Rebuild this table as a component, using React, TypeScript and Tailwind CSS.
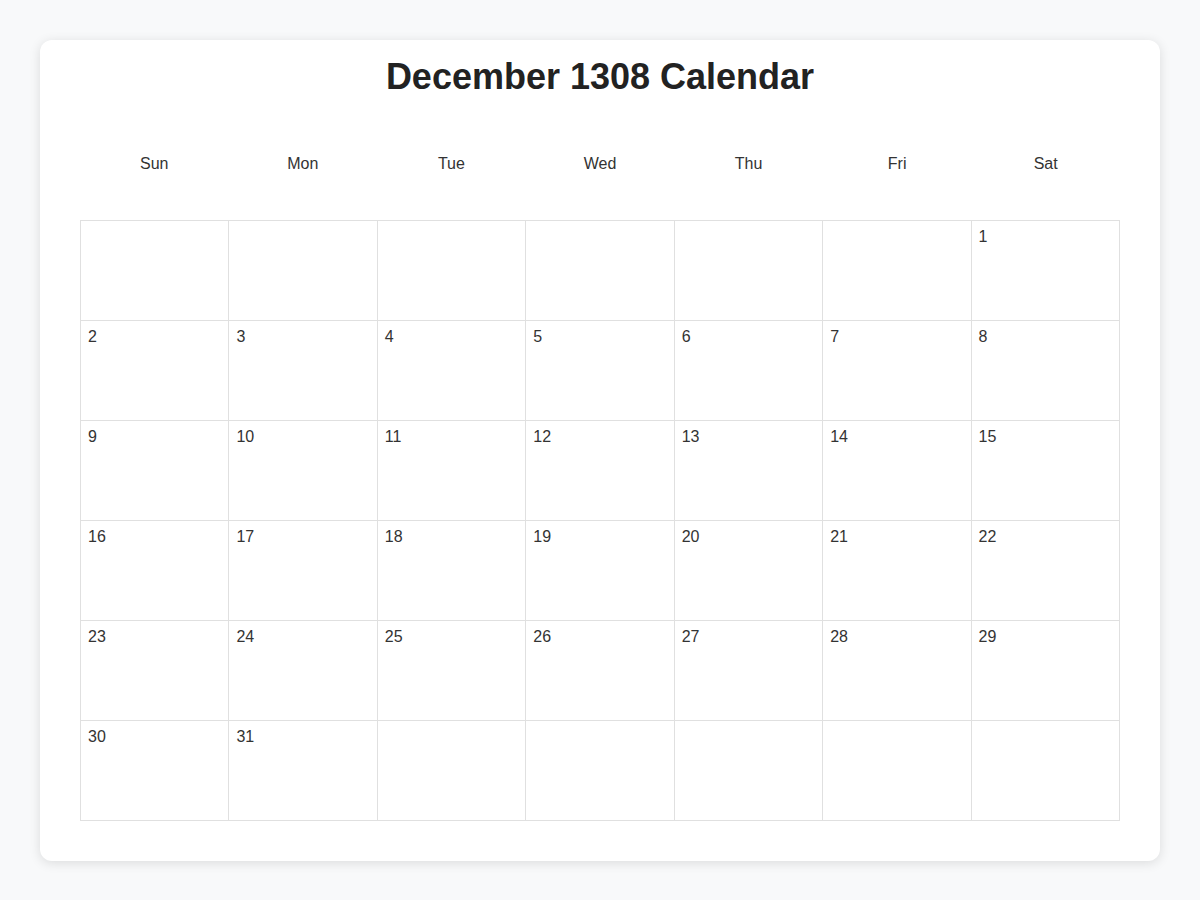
import React from "react";

const days = ["Sun", "Mon", "Tue", "Wed", "Thu", "Fri", "Sat"];

// December 1308 starts on a Saturday
const cells: (number | null)[] = [
  ...Array(6).fill(null),
  ...Array.from({ length: 31 }, (_, i) => i + 1),
];
while (cells.length < 42) cells.push(null);

const App = () => (
  <div className="min-h-screen bg-[#f8f9fa] p-10 font-['Liberation_Sans',Arial,sans-serif] text-[#333]">
    <div className="bg-white rounded-xl shadow-[0_2px_12px_rgba(0,0,0,0.12)] px-10 pt-[15px] pb-10">
      <h1 className="text-center text-[36px] leading-[1.2] font-bold text-[#222]">December 1308 Calendar</h1>
      <div className="grid grid-cols-7 mt-[42px] h-[48px] items-center">
        {days.map((d) => (
          <div key={d} className="text-center text-base">{d}</div>
        ))}
      </div>
      <div className="grid grid-cols-7 mt-[32px] border-l border-t border-[#e0e0e0]">
        {cells.map((n, i) => (
          <div key={i} className="h-[100px] border-r border-b border-[#e0e0e0] pl-[7px] pr-2 pt-[7px] text-base leading-[18px]">
            {n}
          </div>
        ))}
      </div>
    </div>
  </div>
);

export default App;
